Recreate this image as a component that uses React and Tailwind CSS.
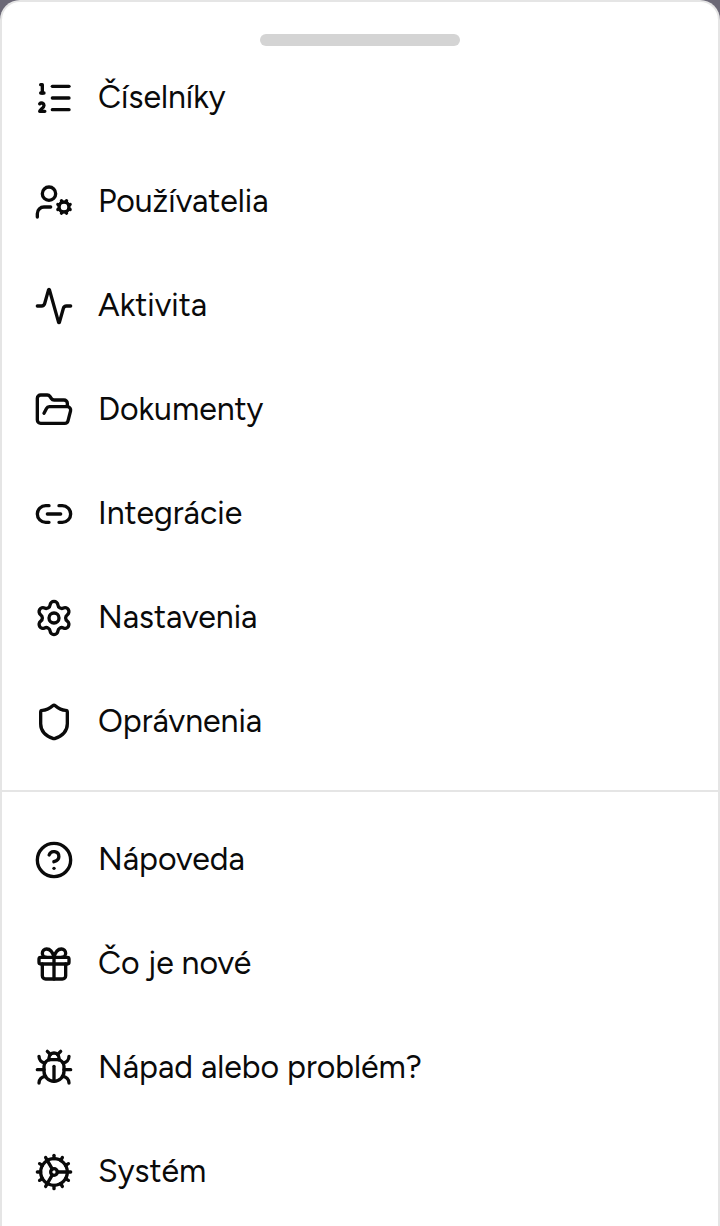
import React from "react";
import {
  Activity,
  Bug,
  CircleQuestionMark,
  Cog,
  FolderOpen,
  Gift,
  Link2,
  ListOrdered,
  Settings,
  Shield,
  UserCog,
} from "lucide-react";

const MAIN_ITEMS = [
  { id: "lists",        label: "Číselníky",    icon: ListOrdered },
  { id: "users",        label: "Používatelia", icon: UserCog },
  { id: "activity",     label: "Aktivita",     icon: Activity },
  { id: "documents",    label: "Dokumenty",    icon: FolderOpen },
  { id: "integrations", label: "Integrácie",   icon: Link2 },
  { id: "settings",     label: "Nastavenia",   icon: Settings },
  { id: "permissions",  label: "Oprávnenia",   icon: Shield },
];

const SUPPORT_ITEMS = [
  { id: "help",     label: "Nápoveda",             icon: CircleQuestionMark },
  { id: "news",     label: "Čo je nové",           icon: Gift },
  { id: "feedback", label: "Nápad alebo problém?", icon: Bug },
  { id: "system",   label: "Systém",               icon: Cog },
];

function MenuList({ items }) {
  return (
    <ul>
      {items.map(({ id, label, icon: Icon }) => (
        <li key={id}>
          <a href={`#${id}`} className="flex items-center gap-6 h-[104px] px-8">
            <Icon size={40} strokeWidth={2} className="shrink-0" aria-hidden="true" />
            <span className="pb-0.5 text-[32px] leading-[48px]">{label}</span>
          </a>
        </li>
      ))}
    </ul>
  );
}

export default function App() {
  return (
    <div className="min-h-screen bg-[#6b6876] flex flex-col">
      <nav
        aria-label="Menu"
        className="flex-1 rounded-t-[20px] border-2 border-b-0 border-[#e5e5e5] bg-white text-[#0a0a0a] font-['Figtree','Inter',sans-serif]"
      >
        {/* Drag handle */}
        <div className="mx-auto mt-8 h-3 w-[200px] rounded-full bg-[#d4d4d4]" />

        <MenuList items={MAIN_ITEMS} />
        <hr className="my-4 border-t-2 border-[#e5e5e5]" />
        <MenuList items={SUPPORT_ITEMS} />
      </nav>
    </div>
  );
}
